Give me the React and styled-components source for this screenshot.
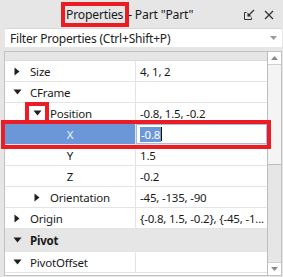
import React from "react";
import styled, { createGlobalStyle } from "styled-components";

const GlobalStyle = createGlobalStyle`
  html, body {
    margin: 0;
    padding: 0;
    background: #e6e6e6;
  }
  body {
    font-family: "Noto Sans", "Open Sans", sans-serif;
    font-size: 11.5px;
    letter-spacing: -0.2px;
    color: #1a1a1a;
  }
`;

const rows = [
  { name: "Size", value: "4, 1, 2", toggle: "right", indent: 0 },
  { name: "CFrame", value: "", toggle: "down", indent: 0 },
  { name: "Position", value: "-0.8, 1.5, -0.2", toggle: "down", indent: 1, marked: true },
  { name: "X", value: "-0.8", center: true, selected: true },
  { name: "Y", value: "1.5", center: true },
  { name: "Z", value: "-0.2", center: true },
  { name: "Orientation", value: "-45, -135, -90", toggle: "right", indent: 1 },
  { name: "Origin", value: "{-0.8, 1.5, -0.2}, {-45, -1...", toggle: "right", indent: 0 },
  { name: "Pivot", category: true, toggle: "down" },
  { name: "PivotOffset", value: "", toggle: "down", indent: 0 },
];

const Triangle = ({ dir }) =>
  dir === "down" ? (
    <svg width="9" height="6" viewBox="0 0 9 6">
      <path d="M0.5 0.5 L8.5 0.5 L4.5 5.5 Z" fill="#1f1f1f" />
    </svg>
  ) : (
    <svg width="6" height="9" viewBox="0 0 6 9">
      <path d="M0.5 0.5 L5.5 4.5 L0.5 8.5 Z" fill="#1f1f1f" />
    </svg>
  );

const App = () => (
  <>
    <GlobalStyle />
    <Window>
      <TitleBar>
        <Title>
          <Marked>Properties</Marked> - Part "Part"
        </Title>
        <TitleIcons>
          <svg width="11" height="11" viewBox="0 0 11 11">
            <path d="M0.5 3.5 V10.5 H7.5" fill="none" stroke="#333" strokeWidth="1" />
            <path d="M0.5 3.5 H2.5 M7.5 10.5 V8.5" fill="none" stroke="#333" strokeWidth="1" />
            <path d="M10 1 L4 7" stroke="#333" strokeWidth="1.2" />
            <path d="M3.5 3.5 V7.5 H7.5 Z" fill="#333" />
          </svg>
          <svg width="10" height="10" viewBox="0 0 10 10">
            <path d="M1 1 L9 9 M9 1 L1 9" stroke="#333" strokeWidth="1.3" />
          </svg>
        </TitleIcons>
      </TitleBar>
      <Filter>
        <span>Filter Properties (Ctrl+Shift+P)</span>
        <svg width="7" height="4" viewBox="0 0 7 4">
          <path d="M0 0 H7 L3.5 4 Z" fill="#9a9a9a" />
        </svg>
      </Filter>
      <ListFrame>
        <List>
          <CategoryStub />
          {rows.map((r) => (
            <Row key={r.name} category={r.category} selected={r.selected}>
              <NameCell
                indent={r.indent || 0}
                center={r.center}
                category={r.category}
                selected={r.selected}
              >
                {r.toggle && (
                  <Toggle marked={r.marked}>
                    <Triangle dir={r.toggle} />
                  </Toggle>
                )}
                <span>{r.name}</span>
              </NameCell>
              {!r.category && (
                <ValueCell selected={r.selected}>
                  {r.selected ? (
                    <>
                      <Highlight>{r.value}</Highlight>
                      <Caret />
                    </>
                  ) : (
                    r.value
                  )}
                </ValueCell>
              )}
            </Row>
          ))}
        </List>
        <Scrollbar>
          <ScrollButton>
            <svg width="7" height="4" viewBox="0 0 7 4">
              <path d="M0 4 H7 L3.5 0 Z" fill="#8a8a8a" />
            </svg>
          </ScrollButton>
          <Thumb />
          <Track />
          <ScrollButton>
            <svg width="7" height="4" viewBox="0 0 7 4">
              <path d="M0 0 H7 L3.5 4 Z" fill="#8a8a8a" />
            </svg>
          </ScrollButton>
        </Scrollbar>
      </ListFrame>
    </Window>
  </>
);

export default App;

const Window = styled.div`
  width: 283px;
  height: 277px;
  display: flex;
  flex-direction: column;
  background: #e6e6e6;
  overflow: hidden;
`;

const TitleBar = styled.div`
  height: 28px;
  display: flex;
  align-items: center;
  padding: 1px 9px 0 0;
  box-sizing: border-box;
`;

const Title = styled.div`
  flex: 1;
  padding-left: 65px;
  font-size: 12.2px;
  color: #1a1a1a;
  white-space: nowrap;
`;

const Marked = styled.span`
  display: inline-block;
  padding: 0 2px 0 1px;
  line-height: 17px;
  outline: 4px solid #ec1c24;
`;

const TitleIcons = styled.div`
  display: flex;
  align-items: center;
  gap: 9px;
`;

const Filter = styled.div`
  height: 18px;
  margin: 0 1px 4px 5px;
  background: #fff;
  border-top: 1px solid #d8d8d8;
  display: flex;
  align-items: center;
  justify-content: space-between;
  padding: 0 5px;
  font-size: 12px;
  color: #222;
`;

const ListFrame = styled.div`
  margin: 0 1px 0 4px;
  height: 223px;
  border: 1px solid #c2c2c2;
  display: flex;
  background: #fff;
`;

const List = styled.div`
  flex: 1;
  display: flex;
  flex-direction: column;
  border-right: 1px solid #bdbdbd;
`;

const CategoryStub = styled.div`
  height: 8px;
  background: #e6e6e6;
  border-bottom: 1px solid #dcdcdc;
`;

const Row = styled.div`
  height: 20px;
  display: grid;
  grid-template-columns: 131px 1fr;
  border-bottom: 1px solid #e4e4e4;
  background: ${(p) => (p.category ? "#e6e6e6" : "#fff")};
  ${(p) => p.category && "grid-template-columns: 1fr; height: 22px;"}
  ${(p) => p.selected && "outline: 4px solid #ec1c24; position: relative; z-index: 1;"}
`;

const NameCell = styled.div`
  display: flex;
  align-items: center;
  justify-content: ${(p) => (p.center ? "center" : "flex-start")};
  padding-left: ${(p) => (p.center ? 0 : 4 + p.indent * 20)}px;
  border-right: ${(p) => (p.category ? "none" : "1px solid #e4e4e4")};
  background: ${(p) => (p.selected ? "#6b97d8" : "transparent")};
  color: ${(p) => (p.selected ? "#eef3fb" : "#1a1a1a")};
  font-weight: ${(p) => (p.category ? 700 : 400)};
  white-space: nowrap;
`;

const Toggle = styled.span`
  width: 16px;
  height: 14px;
  display: inline-flex;
  align-items: center;
  justify-content: center;
  margin-right: 5px;
  ${(p) => p.marked && "outline: 4px solid #ec1c24; position: relative; z-index: 2;"}
`;

const ValueCell = styled.div`
  display: flex;
  align-items: center;
  padding-left: 4px;
  white-space: nowrap;
  overflow: hidden;
  ${(p) => p.selected && "box-shadow: inset 0 0 0 1px #9fbbe6;"}
`;

const Highlight = styled.span`
  background: #6b97d8;
  color: #fff;
  padding: 0 1px;
  line-height: 15px;
`;

const Caret = styled.span`
  width: 1px;
  height: 14px;
  background: #111;
`;

const Scrollbar = styled.div`
  width: 13px;
  display: flex;
  flex-direction: column;
  background: #e8e8e8;
`;

const ScrollButton = styled.div`
  height: 12px;
  background: #fff;
  display: flex;
  align-items: center;
  justify-content: center;
  border-bottom: 1px solid #d0d0d0;
  &:last-child {
    border-bottom: none;
    border-top: 1px solid #d0d0d0;
  }
`;

const Thumb = styled.div`
  height: 99px;
  background: #f4f4f4;
  border-bottom: 1px solid #bdbdbd;
`;

const Track = styled.div`
  flex: 1;
  background: #e6e6e6;
`;
